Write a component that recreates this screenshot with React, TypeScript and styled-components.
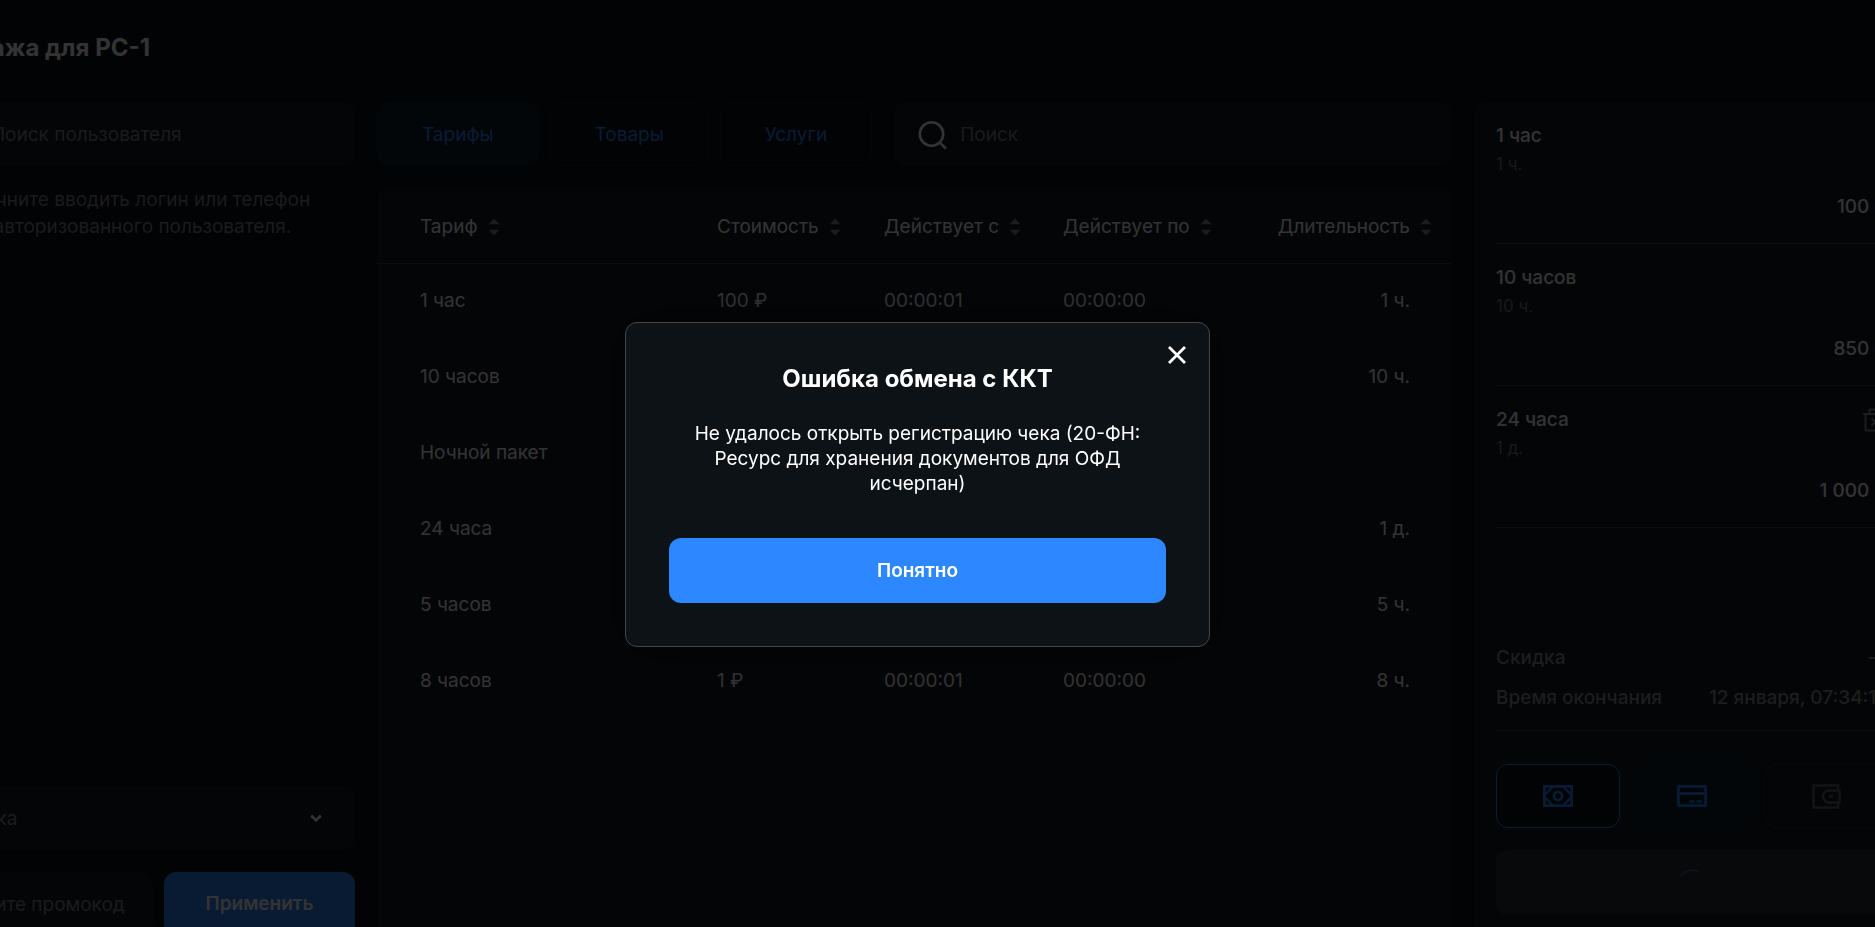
import React from "react";
import styled, { createGlobalStyle } from "styled-components";

const Global = createGlobalStyle`
  *, *::before, *::after { box-sizing: border-box; }
  html, body { margin: 0; height: 100%; overflow: hidden; background: #0a0f18; }
  body { font-family: Inter, "Noto Sans", sans-serif; font-size: 19px; line-height: 24px; color: #fff; }
  button, input, select { font: inherit; color: inherit; margin: 0; }
`;

const Viewport = styled.div`
  height: 100vh;
  overflow: hidden;
`;

/* The sale screen is wider than the window and runs past both of its sides. */
const Page = styled.div`
  display: flex;
  flex-direction: column;
  margin: 0 -35px 0 -75px;
  height: calc(100vh + 9px);
  padding-top: 33px;
`;

const Title = styled.h1`
  margin: 0 0 39px 2px;
  font-size: 24px;
  line-height: 30px;
  font-weight: 700;
`;

const Columns = styled.main`
  flex: 1;
  min-height: 0;
  display: grid;
  grid-template-columns: 430px minmax(0, 1fr) 436px;
  gap: 22px;
`;

const Side = styled.section`
  display: flex;
  flex-direction: column;
`;

const Field = styled.label`
  display: flex;
  align-items: center;
  gap: 12px;
  flex: 1 1 auto;
  min-width: 0;
  height: 64px;
  padding: 1px 24px 0;
  border-radius: 12px;
  background: #141c23;
  color: #fff;
`;

const Spring = styled.div`
  flex: 1;
`;

const UserField = styled(Field)`
  flex: none;
`;

const TextInput = styled.input`
  flex: 1;
  min-width: 0;
  width: 100%;
  padding: 0;
  border: 0;
  outline: 0;
  background: none;
  &::placeholder { color: #84848a; opacity: 1; }
`;

const Hint = styled.p`
  margin: 20px 24px 0 46px;
  line-height: 27px;
  color: #868686;
`;

const Discount = styled(Field)`
  flex: none;
  padding-right: 33px;
  margin-bottom: 22px;
  color: #8a8a90;
`;

const DiscountSelect = styled.select`
  flex: 1;
  appearance: none;
  border: 0;
  padding: 0;
  background: none;
`;

const PromoRow = styled.div`
  display: flex;
  gap: 11px;
`;

const Apply = styled.button`
  height: 64px;
  width: 191px;
  flex: none;
  border: 0;
  border-radius: 12px;
  background: #2d87ff;
  font-weight: 600;
`;

const Center = styled.section`
  display: flex;
  flex-direction: column;
  gap: 22px;
  min-width: 0;
`;

const Toolbar = styled.div`
  display: flex;
  gap: 11px;
`;

const Tab = styled.button<{ $active?: boolean }>`
  height: 64px;
  padding: 1px 44px 0;
  border: 1px solid ${(p) => (p.$active ? "#0f2636" : "#1a2028")};
  border-radius: 12px;
  background: ${(p) => (p.$active ? "#0a1e2b" : "transparent")};
  color: #2d87ff;
`;

const SearchField = styled(Field)`
  margin-left: 11px;
`;

const TablePanel = styled.div`
  flex: 1;
  border-radius: 12px;
  background: #141c23;
`;

const Table = styled.table`
  width: 100%;
  table-layout: fixed;
  border-collapse: collapse;
  color: #fff;
`;

const HeadCell = styled.th<{ $w?: number; $end?: boolean }>`
  width: ${(p) => (p.$w ? `${p.$w}px` : "auto")};
  height: 75px;
  padding: 4px ${(p) => (p.$end ? 20 : 0)}px 0 0;
  border-bottom: 1px solid #3a4046;
  font-weight: 400;
  text-align: ${(p) => (p.$end ? "right" : "left")};
  white-space: nowrap;
  &:first-child { padding-left: 43px; }
`;

const SortButton = styled.button`
  display: inline-flex;
  align-items: center;
  gap: 10px;
  padding: 0;
  border: 0;
  background: none;
`;

const Cell = styled.td<{ $end?: boolean }>`
  height: 76px;
  padding: 0 ${(p) => (p.$end ? 42 : 0)}px 0 0;
  text-align: ${(p) => (p.$end ? "right" : "left")};
  &:first-child { padding-left: 43px; }
`;

const Cart = styled.aside`
  display: flex;
  flex-direction: column;
  padding: 0 22px 21px;
  border-radius: 12px;
  background: #141c23;
`;

const CartList = styled.ul`
  list-style: none;
  margin: 0;
  padding: 0;
`;

const CartItem = styled.li`
  display: flex;
  justify-content: space-between;
  height: 142px;
  padding: 22px 0;
  border-bottom: 1px solid #3a4046;
`;

const ItemName = styled.div`
  font-weight: 500;
`;

const ItemTerm = styled.div`
  margin-top: 4px;
  font-size: 17px;
  color: #7a7a80;
`;

const ItemEnd = styled.div`
  display: flex;
  flex-direction: column;
  justify-content: space-between;
  align-items: flex-end;
  padding-bottom: 2px;
  font-weight: 500;
`;

const Remove = styled.button`
  display: flex;
  padding: 0;
  border: 0;
  background: none;
  color: #8a8a8a;
`;

const SumRow = styled.div`
  display: flex;
  justify-content: space-between;
  height: 40px;
  font-weight: 500;
  color: #909090;
`;

const Rule = styled.hr`
  width: 100%;
  margin: 4px 0 33px;
  border: 0;
  border-top: 1px solid #3a4046;
`;

const Payments = styled.div`
  display: grid;
  grid-template-columns: repeat(3, 1fr);
  gap: 10px;
  margin-bottom: 22px;
`;

const payStyles = {
  outlined: "border-color:#2d87ff;color:#2d87ff;background:#0a0f18;",
  tinted: "border-color:transparent;color:#2d87ff;background:#0a1e2b;",
  disabled: "border-color:#2a2f34;color:#66666a;background:transparent;",
};

const Pay = styled.button<{ $kind: keyof typeof payStyles }>`
  display: flex;
  align-items: center;
  justify-content: center;
  height: 64px;
  padding: 0;
  border: 1px solid;
  border-radius: 12px;
  ${(p) => payStyles[p.$kind]}
`;

const Submit = styled.button`
  display: flex;
  align-items: center;
  justify-content: center;
  height: 65px;
  border: 0;
  border-radius: 12px;
  background: #2b2f35;
`;

const Overlay = styled.div`
  position: fixed;
  inset: 0;
  display: flex;
  align-items: center;
  justify-content: center;
  padding: 42px 40px 0 0;
  background: rgba(0, 0, 0, 0.8);
`;

const Dialog = styled.div`
  position: relative;
  width: 585px;
  padding: 41px 43px 43px;
  border: 1px solid #43474a;
  border-radius: 12px;
  background: #0d1216;
  box-shadow: 0 0 48px rgba(0, 0, 0, 0.5);
  text-align: center;
`;

const DialogTitle = styled.h2`
  margin: 0 0 27px;
  font-size: 24px;
  line-height: 30px;
  font-weight: 700;
`;

const Message = styled.p`
  margin: 0 0 42px;
  padding: 0 22px;
  line-height: 25px;
`;

const Close = styled.button`
  position: absolute;
  top: 20px;
  right: 20px;
  display: flex;
  padding: 0;
  border: 0;
  background: none;
`;

const Confirm = styled.button`
  display: block;
  width: 100%;
  height: 65px;
  border: 0;
  border-radius: 12px;
  background: #2d87ff;
  font-weight: 600;
`;

const SearchIcon = () => (
  <svg width="30" height="30" viewBox="0 0 30 30" fill="none" stroke="currentColor" strokeWidth="2.6" aria-hidden="true">
    <circle cx="13.5" cy="14" r="11.7" />
    <path d="M21.300 22 28 28.700" />
  </svg>
);

const SortIcon = () => (
  <svg width="12" height="20" viewBox="0 0 12 20" fill="#8c8c8c" aria-hidden="true">
    <path d="M6 1.500 11.200 7.200H.8zM6 18.500l5.200-5.700H.8z" />
  </svg>
);

const ChevronIcon = () => (
  <svg width="12" height="9" viewBox="0 0 12 9" fill="none" stroke="#fff" strokeWidth="2.6" aria-hidden="true">
    <path d="M1.200 1.500 6 6.300l4.800-4.800" />
  </svg>
);

const TrashIcon = () => (
  <svg width="26" height="24" viewBox="0 0 26 24" fill="none" stroke="currentColor" strokeWidth="2" aria-hidden="true">
    <path d="M1 6h24M3.500 6v16.500h19V6M7.500 6V1.500h11V6M9.500 10.500l7 7M16.500 10.500l-7 7" />
  </svg>
);

const CashIcon = () => (
  <svg width="30" height="22" viewBox="0 0 30 22" fill="none" stroke="currentColor" strokeWidth="2.8" aria-hidden="true">
    <rect x="1.400" y="1.400" width="27.200" height="19.200" />
    <circle cx="15" cy="11" r="4.100" />
    <path d="M2 9.500 9.500 2M20.500 2 28 9.500M28 12.500 20.500 20M9.500 20 2 12.500" strokeWidth="2.300" />
  </svg>
);

const CardIcon = () => (
  <svg width="30" height="22" viewBox="0 0 30 22" fill="none" stroke="currentColor" strokeWidth="2.800" aria-hidden="true">
    <rect x="1.400" y="1.400" width="27.200" height="19.200" rx=".5" />
    <path d="M1 8.500h28" />
    <path d="M13.500 16.500h3M20.500 16.500h3.500" strokeLinecap="round" strokeWidth="2.400" />
  </svg>
);

const WalletIcon = () => (
  <svg width="29" height="25" viewBox="0 0 29 25" fill="none" stroke="currentColor" strokeWidth="2.400" aria-hidden="true">
    <path d="M26 6V1.500H1.500v22H26V18M27.500 6.500H17a6 6 0 0 0 0 12h10.500zM17 12.500h4" />
  </svg>
);

const SpinnerIcon = () => (
  <svg width="28" height="28" viewBox="0 0 28 28" fill="none" strokeWidth="2" aria-hidden="true">
    <circle cx="14" cy="14" r="13" stroke="#32363d" />
    <path d="M3.500 6.300A13 13 0 0 1 21 3" stroke="#5c5488" />
  </svg>
);

const CloseIcon = () => (
  <svg width="24" height="24" viewBox="0 0 24 24" fill="none" stroke="#fff" strokeWidth="2.800" aria-hidden="true">
    <path d="M4 4l16 16M20 4 4 20" />
  </svg>
);

const tariffs = [
  ["1 час", "100 ₽", "00:00:01", "00:00:00", "1 ч."],
  ["10 часов", "", "", "", "10 ч."],
  ["Ночной пакет", "", "", "", ""],
  ["24 часа", "", "", "", "1 д."],
  ["5 часов", "", "", "", "5 ч."],
  ["8 часов", "1 ₽", "00:00:01", "00:00:00", "8 ч."],
];

const columns = [
  { label: "Тариф", width: 340 },
  { label: "Стоимость", width: 167 },
  { label: "Действует с", width: 179 },
  { label: "Действует по", width: 180 },
  { label: "Длительность" },
];

const cart = [
  { name: "1 час", term: "1 ч.", price: "100 ₽" },
  { name: "10 часов", term: "10 ч.", price: "850 ₽" },
  { name: "24 часа", term: "1 д.", price: "1 000 ₽", removable: true },
];

export default function App() {
  return (
    <Viewport>
      <Global />
      <Page>
        <Title>Продажа для PC-1</Title>
        <Columns>
          <Side>
            <UserField>
              <SearchIcon />
              <TextInput aria-label="Поиск пользователя" placeholder="Поиск пользователя" />
            </UserField>
            <Hint>Начните вводить логин или телефон неавторизованного пользователя.</Hint>
            <Spring />
            <Discount>
              <DiscountSelect aria-label="Скидка">
                <option>Скидка</option>
              </DiscountSelect>
              <ChevronIcon />
            </Discount>
            <PromoRow>
              <Field>
                <TextInput aria-label="Промокод" placeholder="Введите промокод" />
              </Field>
              <Apply type="button">Применить</Apply>
            </PromoRow>
          </Side>

          <Center>
            <Toolbar>
              <Tab type="button" $active>Тарифы</Tab>
              <Tab type="button">Товары</Tab>
              <Tab type="button">Услуги</Tab>
              <SearchField>
                <SearchIcon />
                <TextInput aria-label="Поиск" placeholder="Поиск" />
              </SearchField>
            </Toolbar>
            <TablePanel>
              <Table>
                <thead>
                  <tr>
                    {columns.map((c) => (
                      <HeadCell key={c.label} $w={c.width} $end={!c.width}>
                        <SortButton type="button">
                          {c.label}
                          <SortIcon />
                        </SortButton>
                      </HeadCell>
                    ))}
                  </tr>
                </thead>
                <tbody>
                  {tariffs.map((row) => (
                    <tr key={row[0]}>
                      {row.map((text, i) => (
                        <Cell key={i} $end={i === 4}>{text}</Cell>
                      ))}
                    </tr>
                  ))}
                </tbody>
              </Table>
            </TablePanel>
          </Center>

          <Cart>
            <CartList>
              {cart.map((item) => (
                <CartItem key={item.name}>
                  <div>
                    <ItemName>{item.name}</ItemName>
                    <ItemTerm>{item.term}</ItemTerm>
                  </div>
                  <ItemEnd>
                    {item.removable ? (
                      <Remove type="button" aria-label="Удалить"><TrashIcon /></Remove>
                    ) : (
                      <span />
                    )}
                    <span>{item.price}</span>
                  </ItemEnd>
                </CartItem>
              ))}
            </CartList>
            <Spring />
            <SumRow><span>Скидка</span><span>—</span></SumRow>
            <SumRow><span>Время окончания</span><span>12 января, 07:34:15</span></SumRow>
            <Rule />
            <Payments>
              <Pay type="button" $kind="outlined" aria-label="Наличные"><CashIcon /></Pay>
              <Pay type="button" $kind="tinted" aria-label="Карта"><CardIcon /></Pay>
              <Pay type="button" $kind="disabled" aria-label="Кошелёк" disabled><WalletIcon /></Pay>
            </Payments>
            <Submit type="button" aria-label="Оплатить"><SpinnerIcon /></Submit>
          </Cart>
        </Columns>
      </Page>

      <Overlay>
        <Dialog role="alertdialog" aria-modal="true" aria-labelledby="dialog-title">
          <Close type="button" aria-label="Закрыть"><CloseIcon /></Close>
          <DialogTitle id="dialog-title">Ошибка обмена с ККТ</DialogTitle>
          <Message>Не удалось открыть регистрацию чека (20-ФН: Ресурс для хранения документов для ОФД исчерпан)</Message>
          <Confirm type="button">Понятно</Confirm>
        </Dialog>
      </Overlay>
    </Viewport>
  );
}
